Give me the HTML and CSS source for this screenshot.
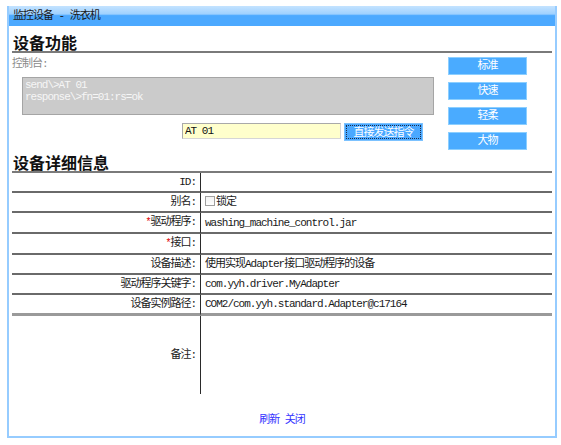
FILE: index.html
```html
<!DOCTYPE html>
<html lang="zh-CN">
<head>
<meta charset="utf-8">
<title>监控设备 - 洗衣机</title>
<link rel="stylesheet" href="styles.css">
</head>
<body>
<div class="win">
  <div class="titlebar">监控设备 - 洗衣机</div>
  <div class="content">
    <h2 class="sec sec-first">设备功能</h2>
    <div class="func">
      <div class="console-col">
        <div class="clabel">控制台:</div>
        <div class="console">send\&gt;AT 01<br>response\&gt;fn=01:rs=ok</div>
        <div class="send-row">
          <input class="cmd" type="text" value="AT 01">
          <button class="send"><span class="focus">直接发送指令</span></button>
        </div>
      </div>
      <div class="modes">
        <button class="mode">标准</button>
        <button class="mode">快速</button>
        <button class="mode">轻柔</button>
        <button class="mode">大物</button>
      </div>
    </div>
    <h2 class="sec">设备详细信息</h2>
    <table class="detail">
      <tr><td class="lab">ID:</td><td class="val"></td></tr>
      <tr><td class="lab">别名:</td><td class="val"><span class="chk"></span>锁定</td></tr>
      <tr><td class="lab"><span class="req">*</span>驱动程序:</td><td class="val">washing_machine_control.jar</td></tr>
      <tr><td class="lab"><span class="req">*</span>接口:</td><td class="val"></td></tr>
      <tr><td class="lab">设备描述:</td><td class="val">使用实现Adapter接口驱动程序的设备</td></tr>
      <tr><td class="lab">驱动程序关键字:</td><td class="val">com.yyh.driver.MyAdapter</td></tr>
      <tr class="path"><td class="lab">设备实例路径:</td><td class="val">COM2/com.yyh.standard.Adapter@c17164</td></tr>
      <tr class="note"><td class="lab">备注:</td><td class="val"></td></tr>
    </table>
    <div class="footer"><a class="lnk" href="#">刷新</a> <a class="lnk" href="#">关闭</a></div>
  </div>
</div>
</body>
</html>
```

FILE: styles.css
```css
html, body {
  margin: 0;
  padding: 0;
  background: #ffffff;
}
body {
  font-family: "Liberation Mono", "Noto Sans CJK SC", monospace;
  font-size: 11px;
  letter-spacing: -1px;
  color: #1a1a1a;
}
.win {
  box-sizing: border-box;
  margin: 6px 0 0 7px;
  width: 550px;
  height: 432px;
  border: 2px solid #96ccff;
  border-top: 0;
  background: #fff;
}
.titlebar {
  height: 20px;
  line-height: 21px;
  padding-left: 4px;
  background: linear-gradient(to bottom, #c4e3ff 0%, #9fd1ff 40%, #4ca9ff 48%, #4ca9ff 100%);
  color: #1a1a1a;
}
.content {
  padding: 0 3px;
}
.sec {
  margin: 0;
  padding: 3px 0 0 1px;
  font-family: "Noto Sans CJK SC", sans-serif;
  font-size: 16px;
  line-height: 18px;
  font-weight: bold;
  letter-spacing: 0;
  color: #111;
  border-bottom: 2px solid #7a7a7a;
}
.sec-first {
  padding-top: 7px;
}
.func {
  display: flex;
  justify-content: space-between;
}
.clabel {
  margin-top: 4px;
  line-height: 14px;
  color: #8a8a8a;
}
.console {
  box-sizing: border-box;
  margin: 6px 0 0 10px;
  width: 412px;
  height: 38px;
  padding: 1px 2px;
  background: #cbcbcb;
  border: 1px solid #a5a5a5;
  color: #f6f6f6;
  line-height: 12px;
}
.send-row {
  display: flex;
  align-items: flex-start;
  margin-top: 8px;
  padding-left: 170px;
}
.cmd {
  box-sizing: border-box;
  width: 159px;
  height: 16px;
  margin: 0;
  padding: 0 2px;
  border: 1px solid #a9a9a9;
  border-right-color: #d6d6d6;
  border-bottom-color: #d6d6d6;
  background: #ffffcc;
  font: inherit;
  letter-spacing: -1px;
  color: #111;
  outline: none;
}
.send {
  box-sizing: border-box;
  margin: 0 0 0 3px;
  width: 79px;
  height: 18px;
  padding: 1px;
  border: 1px solid #7cc2ff;
  background: #4aa8ff;
  color: #fff;
  font: inherit;
  letter-spacing: -1px;
  cursor: pointer;
}
.focus {
  display: block;
  height: 14px;
  line-height: 14px;
  border: 1px dotted #1f2f4a;
  box-sizing: border-box;
}
.modes {
  display: flex;
  flex-direction: column;
  gap: 7px;
  margin: 4px 25px 0 0;
}
.mode {
  box-sizing: border-box;
  width: 79px;
  height: 18px;
  margin: 0;
  padding: 0;
  border: 1px solid #8ccfff;
  background: #4aabff;
  color: #fff;
  font: inherit;
  letter-spacing: -1px;
  line-height: 16px;
  cursor: pointer;
}
.detail {
  width: 540px;
  border-collapse: separate;
  border-spacing: 0;
}
.detail td {
  height: 18px;
  padding: 0;
  border-bottom: 2px solid #6a6a6a;
  line-height: 18px;
  white-space: nowrap;
}
.detail .lab {
  width: 184px;
  padding-right: 4px;
  text-align: right;
}
.detail .val {
  border-left: 1px solid #2a2a2a;
  padding-left: 4px;
}
.detail .path td {
  height: 18px;
  border-bottom: 3px solid #9a9a9a;
}
.detail .note td {
  height: 78px;
  border-bottom: 0;
}
.req {
  color: #e00000;
  font-size: 10px;
}
.chk {
  display: inline-block;
  box-sizing: border-box;
  width: 10px;
  height: 10px;
  margin-right: 1px;
  vertical-align: -1px;
  border: 1px solid #a0a0a0;
  background: linear-gradient(#f2f2f2, #ffffff);
}
.footer {
  margin-top: 19px;
  text-align: center;
  line-height: 14px;
}
.lnk {
  color: #3434ff;
  text-decoration: none;
}
```
